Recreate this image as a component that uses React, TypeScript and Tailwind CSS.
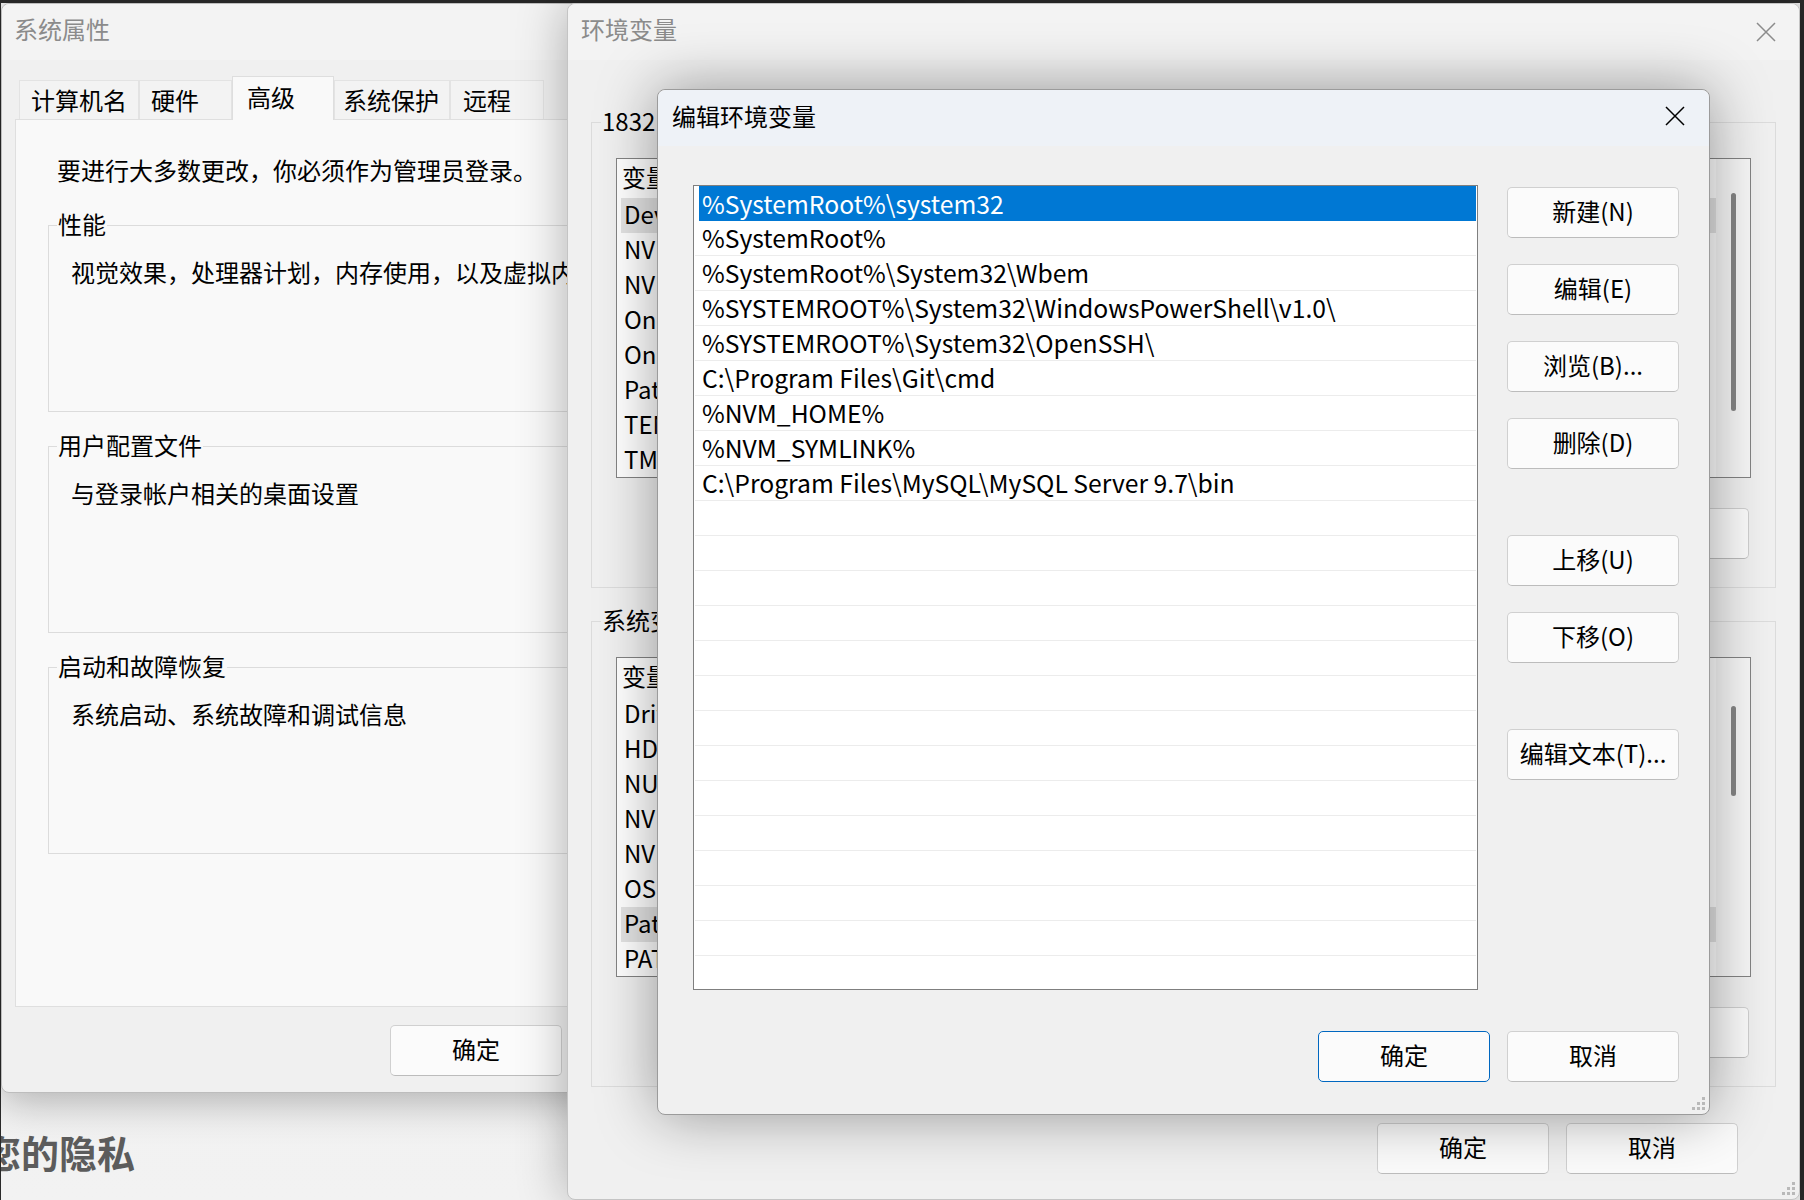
import React from "react";

type Tab = { label: string; width: string; pad: string; active?: boolean };

const tabs: Tab[] = [
  { label: "计算机名", width: "w-[120px]", pad: "pl-[11px]" },
  { label: "硬件", width: "w-[93px]", pad: "pl-[11px]" },
  { label: "高级", width: "w-[102px]", pad: "pl-[14px]", active: true },
  { label: "系统保护", width: "w-[116px]", pad: "pl-[8px]" },
  { label: "远程", width: "w-[94px]", pad: "pl-[12px]" },
];

const userVars: [string, string][] = [
  ["DevEco Studio", "D:\\Huawei\\DevEco Studio\\bin;"],
  ["NVM_HOME", "D:\\nvm"],
  ["NVM_SYMLINK", "D:\\nodejs"],
  ["OneDrive", "C:\\Users\\1832\\OneDrive"],
  ["OneDriveConsumer", "C:\\Users\\1832\\OneDrive"],
  ["Path", "C:\\Users\\1832\\AppData\\Local\\..."],
  ["TEMP", "C:\\Users\\1832\\AppData\\Local\\Temp"],
  ["TMP", "C:\\Users\\1832\\AppData\\Local\\Temp"],
];

const systemVars: [string, string][] = [
  ["DriverData", "C:\\Windows\\System32\\Drivers\\DriverData"],
  ["HDC_SERVER_PORT", "7035"],
  ["NUMBER_OF_PROCESSORS", "16"],
  ["NVM_HOME", "D:\\nvm"],
  ["NVM_SYMLINK", "D:\\nodejs"],
  ["OS", "Windows_NT"],
  ["Path", "C:\\Windows\\system32;C:\\Windows;..."],
  ["PATHEXT", ".COM;.EXE;.BAT;.CMD;.VBS;.VBE"],
];

const pathEntries = [
  "%SystemRoot%\\system32",
  "%SystemRoot%",
  "%SystemRoot%\\System32\\Wbem",
  "%SYSTEMROOT%\\System32\\WindowsPowerShell\\v1.0\\",
  "%SYSTEMROOT%\\System32\\OpenSSH\\",
  "C:\\Program Files\\Git\\cmd",
  "%NVM_HOME%",
  "%NVM_SYMLINK%",
  "C:\\Program Files\\MySQL\\MySQL Server 9.7\\bin",
];

function CloseIcon({ className }: { className: string }) {
  return (
    <svg viewBox="0 0 20 20" fill="none" stroke="currentColor" strokeWidth="1.5" className={className}>
      <path d="M1 1L19 19M19 1L1 19" />
    </svg>
  );
}

function Grip() {
  return (
    <svg width="15" height="15" viewBox="0 0 15 15" fill="#b9b9b9">
      <rect x="11" y="1" width="3" height="3" />
      <rect x="6" y="6" width="3" height="3" />
      <rect x="11" y="6" width="3" height="3" />
      <rect x="1" y="11" width="3" height="3" />
      <rect x="6" y="11" width="3" height="3" />
      <rect x="11" y="11" width="3" height="3" />
    </svg>
  );
}

function Button({ label, primary = false }: { label: string; primary?: boolean }) {
  return (
    <div
      className={
        primary
          ? "flex h-[51px] w-[172px] shrink-0 items-center justify-center rounded-[5px] border border-[#0067c0] bg-[#fbfbfb] pb-[3px] text-[24px] text-black"
          : "flex h-[51px] w-[172px] shrink-0 items-center justify-center rounded-[5px] border border-[#d0d0d0] border-b-[#bcbcbc] bg-[#fbfbfb] pb-[3px] text-[24px] text-black"
      }
    >
      {label}
    </div>
  );
}

function GroupBox({ label, children, bg }: { label: string; children?: React.ReactNode; bg: string }) {
  return (
    <div className="h-[187px] border border-[#dcdcdc]">
      <span className={`-mt-[16px] ml-[8px] block w-fit px-[1px] text-[24px] leading-[28px] ${bg}`}>{label}</span>
      <p className="mt-[18px] pl-[22px] text-[24px] leading-[32px] whitespace-nowrap">{children}</p>
    </div>
  );
}

function SystemProperties() {
  return (
    <section className="absolute left-[1px] top-[3px] flex h-[1090px] w-[954px] flex-col rounded-[8px] border border-[#bdbdbd] bg-[#f0f0f0] shadow-[0_8px_40px_rgba(0,0,0,0.28)]">
      <header className="flex h-[56px] shrink-0 items-center rounded-t-[8px] bg-[#f3f3f3] pb-[6px] pl-[12px] text-[24px] text-[#8b8b8b]">
        系统属性
      </header>

      <div className="flex h-[59px] shrink-0 items-end pl-[17px]">
        {tabs.map((tab) => (
          <div
            key={tab.label}
            className={
              tab.active
                ? `relative z-10 -mb-px flex h-[44px] items-center border border-b-0 border-[#dedede] bg-[#f9f9f9] pb-[4px] text-[24px] ${tab.width} ${tab.pad}`
                : `flex h-[39px] items-center border border-b-0 border-[#e3e3e3] bg-[#f3f3f3] text-[24px] ${tab.width} ${tab.pad}`
            }
          >
            {tab.label}
          </div>
        ))}
      </div>

      <div className="ml-[13px] flex h-[888px] w-[925px] shrink-0 flex-col border border-[#dfdfdf] bg-[#f9f9f9] px-[32px] pt-[34px]">
        <p className="pl-[9px] text-[24px] leading-[32px]">要进行大多数更改，你必须作为管理员登录。</p>
        <div className="mt-[39px] flex flex-col gap-[34px]">
          <GroupBox label="性能" bg="bg-[#f9f9f9]">视觉效果，处理器计划，内存使用，以及虚拟内存</GroupBox>
          <GroupBox label="用户配置文件" bg="bg-[#f9f9f9]">与登录帐户相关的桌面设置</GroupBox>
          <GroupBox label="启动和故障恢复" bg="bg-[#f9f9f9]">系统启动、系统故障和调试信息</GroupBox>
        </div>
      </div>

      <div className="mt-[18px] flex justify-end gap-[17px] pr-[14px]">
        <Button label="确定" />
        <Button label="取消" />
        <Button label="应用(A)" />
      </div>
    </section>
  );
}

function VarList({ rows, selected, thumbTop, thumbHeight }: { rows: [string, string][]; selected: number; thumbTop: string; thumbHeight: string }) {
  return (
    <div className="flex h-[320px] border border-[#838383] bg-white text-[24px]">
      <div className="flex flex-1 flex-col overflow-hidden">
        <div className="flex h-[39px] shrink-0 items-center pb-[3px] pl-[5px]">
          <span className="w-[380px]">变量</span>
          <span>值</span>
        </div>
        {rows.map(([name, value], i) => (
          <div
            key={name + i}
            className={
              i === selected
                ? "ml-[4px] flex h-[35px] shrink-0 items-center bg-[#e3e3e3] pb-[3px] pl-[3px] whitespace-nowrap"
                : "flex h-[35px] shrink-0 items-center pb-[3px] pl-[7px] whitespace-nowrap"
            }
          >
            <span className="w-[376px] shrink-0">{name}</span>
            <span>{value}</span>
          </div>
        ))}
      </div>
      <div className="flex w-[34px] shrink-0 justify-center bg-[#f7f7f7]">
        <div className={`w-[5px] rounded-full bg-[#858585] ${thumbTop} ${thumbHeight}`} />
      </div>
    </div>
  );
}

function VarGroup({ label, rows, selected, thumbTop, thumbHeight }: { label: string; rows: [string, string][]; selected: number; thumbTop: string; thumbHeight: string }) {
  return (
    <div className="h-[466px] border border-[#dcdcdc] px-[24px]">
      <span className="-mt-[16px] -ml-[15px] block w-fit bg-[#f0f0f0] px-[1px] text-[24px] leading-[28px]">{label}</span>
      <div className="mt-[23px]">
        <VarList rows={rows} selected={selected} thumbTop={thumbTop} thumbHeight={thumbHeight} />
      </div>
      <div className="mt-[30px] flex justify-end gap-[17px] pr-[2px]">
        <Button label="新建(W)..." />
        <Button label="编辑(I)..." />
        <Button label="删除(L)" />
      </div>
    </div>
  );
}

function EnvironmentVariables() {
  return (
    <section className="absolute left-[567px] top-[3px] flex h-[1197px] w-[1233px] flex-col rounded-[8px] border border-[#c4c4c4] bg-[#f0f0f0] shadow-[0_0_50px_rgba(0,0,0,0.3)]">
      <header className="flex h-[56px] shrink-0 items-center justify-between rounded-t-[8px] bg-[#f3f3f3] pb-[6px] pl-[13px] pr-[23px] text-[24px] text-[#8b8b8b]">
        环境变量
        <CloseIcon className="mt-[6px] size-[20px]" />
      </header>
      <div className="mx-[23px] mt-[62px] flex flex-col gap-[33px]">
        <VarGroup label="1832 的用户变量(U)" rows={userVars} selected={0} thumbTop="mt-[34px]" thumbHeight="h-[218px]" />
        <VarGroup label="系统变量(S)" rows={systemVars} selected={6} thumbTop="mt-[48px]" thumbHeight="h-[90px]" />
      </div>
      <div className="mt-[36px] flex justify-end gap-[17px] pr-[61px]">
        <Button label="确定" />
        <Button label="取消" />
      </div>
      <div className="absolute right-[3px] bottom-[3px]">
        <Grip />
      </div>
    </section>
  );
}

function EditVariable() {
  const rows = Array.from({ length: 23 }, (_, i) => pathEntries[i] ?? "");
  return (
    <section className="absolute left-[657px] top-[89px] flex h-[1026px] w-[1053px] flex-col rounded-[8px] border border-[#9b9b9b] bg-[#f0f0f0] shadow-[0_0_60px_rgba(0,0,0,0.38)]">
      <header className="flex h-[56px] shrink-0 items-center justify-between rounded-t-[8px] bg-[#eef2f7] pb-[4px] pl-[14px] pr-[24px] text-[24px] text-black">
        编辑环境变量
        <CloseIcon className="size-[20px]" />
      </header>

      <div className="flex pl-[35px] pt-[39px]">
        <div className="flex h-[805px] w-[785px] flex-col overflow-hidden border border-[#7f7f7f] bg-white px-[1px] text-[24.7px]">
          {rows.map((entry, i) => (
            <div
              key={i}
              className={
                i === 0
                  ? "ml-[4px] flex h-[35px] shrink-0 items-center bg-[#0078d4] pl-[3px] text-white whitespace-nowrap"
                  : "flex h-[35px] shrink-0 items-center border-b border-[#ececec] pl-[7px] whitespace-nowrap"
              }
            >
              {entry}
            </div>
          ))}
        </div>

        <div className="ml-[29px] flex flex-col pt-[2px]">
          <div className="flex flex-col gap-[26px]">
            <Button label="新建(N)" />
            <Button label="编辑(E)" />
            <Button label="浏览(B)..." />
            <Button label="删除(D)" />
          </div>
          <div className="mt-[66px] flex flex-col gap-[26px]">
            <Button label="上移(U)" />
            <Button label="下移(O)" />
          </div>
          <div className="mt-[66px]">
            <Button label="编辑文本(T)..." />
          </div>
        </div>
      </div>

      <div className="mt-[41px] flex justify-end gap-[17px] pr-[30px]">
        <Button label="确定" primary />
        <Button label="取消" />
      </div>

      <div className="absolute right-[3px] bottom-[3px]">
        <Grip />
      </div>
    </section>
  );
}

export default function App() {
  return (
    <div className="relative h-[1200px] w-[1804px] overflow-hidden bg-[#2a2a2a] font-['Noto_Sans_CJK_SC',sans-serif] text-black">
      {/* settings app lying behind the dialogs */}
      <div className="absolute left-[1px] top-[3px] right-[4px] bottom-0 flex flex-col justify-end overflow-hidden bg-gradient-to-b from-[#ececec] to-[#f2f2f2] pb-[24px]">
        <span className="-ml-[18px] text-[38px] leading-[48px] font-semibold text-[#5c5c5c]">您的隐私</span>
      </div>

      <SystemProperties />
      <EnvironmentVariables />
      <EditVariable />
    </div>
  );
}
